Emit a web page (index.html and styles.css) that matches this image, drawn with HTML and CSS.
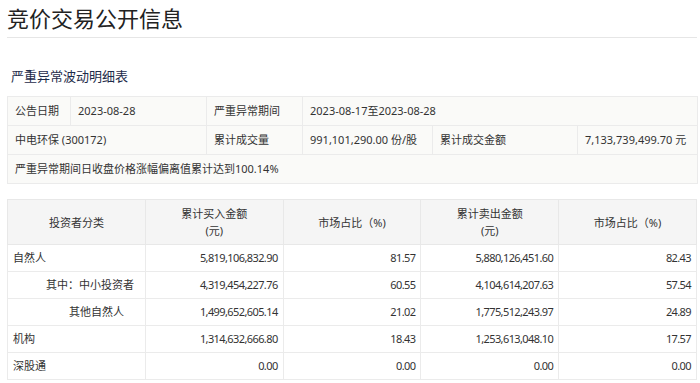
FILE: index.html
```html
<!DOCTYPE html>
<html lang="zh-CN">
<head>
    <meta charset="UTF-8">
    <title>竞价交易公开信息</title>
    <link rel="stylesheet" href="styles.css">
</head>
<body>
    <div class="page">
        <h1 class="page-title">竞价交易公开信息</h1>

        <h2 class="sub-title">严重异常波动明细表</h2>

        <table class="info-table">
            <colgroup>
                <col style="width: 63px">
                <col style="width: 136px">
                <col style="width: 96px">
                <col style="width: 130px">
                <col style="width: 145px">
                <col style="width: 120px">
            </colgroup>
            <tr>
                <td>公告日期</td>
                <td>2023-08-28</td>
                <td>严重异常期间</td>
                <td colspan="3">2023-08-17至2023-08-28</td>
            </tr>
            <tr>
                <td colspan="2">中电环保 (300172)</td>
                <td>累计成交量</td>
                <td>991,101,290.00 份/股</td>
                <td>累计成交金额</td>
                <td>7,133,739,499.70 元</td>
            </tr>
            <tr>
                <td colspan="6">严重异常期间日收盘价格涨幅偏离值累计达到100.14%</td>
            </tr>
        </table>

        <table class="data-table">
            <thead>
                <tr>
                    <th>投资者分类</th>
                    <th>累计买入金额<br>(元)</th>
                    <th>市场占比（%)</th>
                    <th>累计卖出金额<br>(元)</th>
                    <th>市场占比（%)</th>
                </tr>
            </thead>
            <tbody>
                <tr>
                    <td class="name">自然人</td>
                    <td class="num">5,819,106,832.90</td>
                    <td class="num">81.57</td>
                    <td class="num">5,880,126,451.60</td>
                    <td class="num">82.43</td>
                </tr>
                <tr>
                    <td class="name indent-1">其中：中小投资者</td>
                    <td class="num">4,319,454,227.76</td>
                    <td class="num">60.55</td>
                    <td class="num">4,104,614,207.63</td>
                    <td class="num">57.54</td>
                </tr>
                <tr>
                    <td class="name indent-2">其他自然人</td>
                    <td class="num">1,499,652,605.14</td>
                    <td class="num">21.02</td>
                    <td class="num">1,775,512,243.97</td>
                    <td class="num">24.89</td>
                </tr>
                <tr>
                    <td class="name">机构</td>
                    <td class="num">1,314,632,666.80</td>
                    <td class="num">18.43</td>
                    <td class="num">1,253,613,048.10</td>
                    <td class="num">17.57</td>
                </tr>
                <tr>
                    <td class="name">深股通</td>
                    <td class="num">0.00</td>
                    <td class="num">0.00</td>
                    <td class="num">0.00</td>
                    <td class="num">0.00</td>
                </tr>
            </tbody>
        </table>
    </div>
</body>
</html>
```

FILE: styles.css
```css
* {
    margin: 0;
    padding: 0;
    box-sizing: border-box;
}

body {
    background: #fff;
    color: #333;
    font-family: "Noto Sans", "Noto Sans CJK SC", sans-serif;
    font-size: 11px;
}

.page {
    padding: 0 3px 0 7px;
}

.page-title {
    font-size: 22px;
    font-weight: normal;
    line-height: 30px;
    padding: 3px 0 4px;
    color: #222;
    border-bottom: 1px solid #e6e6e6;
}

.sub-title {
    font-size: 13px;
    font-weight: normal;
    line-height: 20px;
    color: #1e2b4a;
    padding-left: 4px;
    margin: 28px 0 10px;
}

table {
    width: 100%;
    border-collapse: collapse;
    table-layout: fixed;
}

.info-table {
    background: #fafaf8;
}

.info-table td {
    border: 1px solid #ebebeb;
    padding: 6px 7px;
    line-height: 16px;
    white-space: nowrap;
}

.data-table {
    margin-top: 15px;
}

.data-table th {
    background: #f5f5f5;
    font-weight: normal;
    line-height: 17px;
    padding: 5px 4px;
    border: 1px solid #e8e8e8;
    text-align: center;
}

.data-table td {
    border: 1px solid #ebebeb;
    padding: 5px;
    line-height: 16px;
    white-space: nowrap;
}

.data-table .num {
    text-align: right;
    letter-spacing: -0.6px;
}

.data-table .indent-1 {
    padding-left: 38px;
}

.data-table .indent-2 {
    padding-left: 61px;
}
```
